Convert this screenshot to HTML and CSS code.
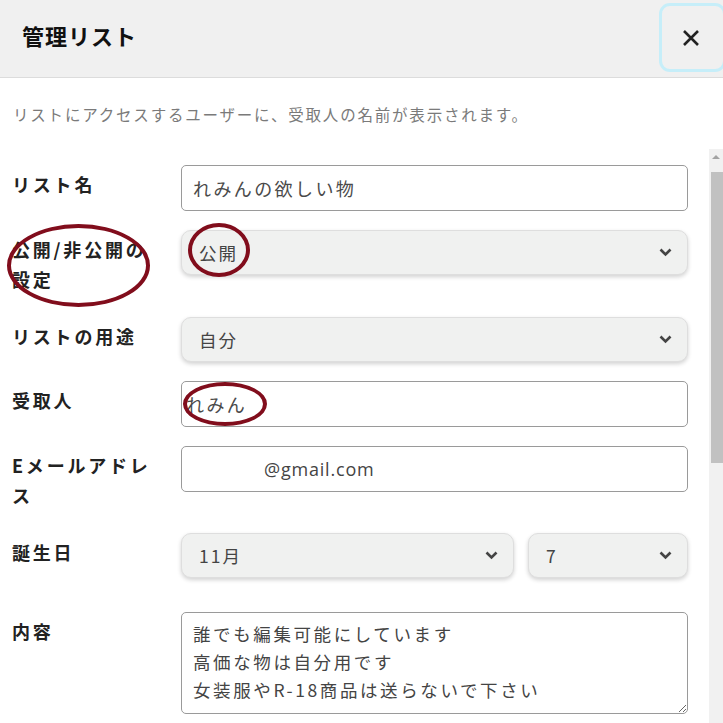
FILE: index.html
```html
<!DOCTYPE html>
<html lang="ja">
<head>
<meta charset="utf-8">
<title>管理リスト</title>
<link rel="stylesheet" href="styles.css">
</head>
<body>
<div class="modal">
  <header class="modal-header">
    <h1 class="modal-title">管理リスト</h1>
    <button class="close-btn" aria-label="閉じる">
      <svg width="20" height="20" viewBox="0 0 20 20"><path d="M3 3 L17 17 M17 3 L3 17" stroke="#222" stroke-width="2.6" fill="none"/></svg>
    </button>
  </header>
  <p class="note">リストにアクセスするユーザーに、受取人の名前が表示されます。</p>
  <div class="body">
    <form class="form">
      <div class="row">
        <label class="label">リスト名</label>
        <div class="field"><input class="input" type="text" value="れみんの欲しい物"></div>
      </div>
      <div class="row">
        <label class="label">公開/非公開の設定</label>
        <div class="field">
          <div class="select"><span>公開</span>
            <svg class="chev" width="13" height="9" viewBox="0 0 13 9"><path d="M1.5 1.5 L6.5 6.5 L11.5 1.5" stroke="#444" stroke-width="2.6" fill="none"/></svg>
          </div>
        </div>
      </div>
      <div class="row">
        <label class="label">リストの用途</label>
        <div class="field">
          <div class="select"><span>自分</span>
            <svg class="chev" width="13" height="9" viewBox="0 0 13 9"><path d="M1.5 1.5 L6.5 6.5 L11.5 1.5" stroke="#444" stroke-width="2.6" fill="none"/></svg>
          </div>
        </div>
      </div>
      <div class="row">
        <label class="label">受取人</label>
        <div class="field"><input class="input tight" type="text" value="れみん"></div>
      </div>
      <div class="row">
        <label class="label">Eメールアドレス</label>
        <div class="field"><div class="input email"><span class="mail">@gmail.com</span></div></div>
      </div>
      <div class="row row-bday">
        <label class="label">誕生日</label>
        <div class="field bday">
          <div class="select month"><span>11月</span>
            <svg class="chev" width="13" height="9" viewBox="0 0 13 9"><path d="M1.5 1.5 L6.5 6.5 L11.5 1.5" stroke="#444" stroke-width="2.6" fill="none"/></svg>
          </div>
          <div class="select day"><span>7</span>
            <svg class="chev" width="13" height="9" viewBox="0 0 13 9"><path d="M1.5 1.5 L6.5 6.5 L11.5 1.5" stroke="#444" stroke-width="2.6" fill="none"/></svg>
          </div>
        </div>
      </div>
      <div class="row">
        <label class="label">内容</label>
        <div class="field"><textarea class="textarea">誰でも編集可能にしています
高価な物は自分用です
女装服やR-18商品は送らないで下さい</textarea></div>
      </div>
    </form>
    <div class="scrollbar">
      <div class="sb-arrow"></div>
      <div class="sb-thumb"></div>
    </div>
  </div>
</div>
<div class="mark mark-label"></div>
<div class="mark mark-public"></div>
<div class="mark mark-name"></div>
</body>
</html>
```
FILE: styles.css
```css
html, body {
  margin: 0;
  padding: 0;
}
body {
  width: 723px;
  height: 723px;
  overflow: hidden;
  position: relative;
  background: #fff;
  font-family: "Noto Sans CJK JP", "Noto Sans", sans-serif;
  color: #222;
}
.modal {
  display: flex;
  flex-direction: column;
  height: 723px;
}
.modal-header {
  height: 77px;
  flex: none;
  display: flex;
  align-items: flex-start;
  justify-content: space-between;
  background: #f0f0f0;
  border-bottom: 1px solid #dcdcdc;
}
.modal-title {
  margin: 20px 0 0 22px;
  font-size: 22px;
  line-height: 30px;
  font-weight: 700;
  letter-spacing: 1px;
  color: #111;
}
.close-btn {
  margin: 3px -3px 0 0;
  width: 67px;
  height: 69px;
  box-sizing: border-box;
  border: 3px solid #c6eef9;
  border-radius: 11px;
  background: #f0f0f0;
  display: flex;
  align-items: center;
  justify-content: center;
  padding: 0 4px 0 0;
}
.close-btn svg {
  display: block;
}
.note {
  flex: none;
  margin: 0;
  padding: 24px 0 23px 13px;
  font-size: 15.5px;
  line-height: 24px;
  letter-spacing: 1.8px;
  color: #7a7a7a;
}
.body {
  flex: 1;
  display: flex;
  min-height: 0;
}
.form {
  flex: 1;
  padding: 16px 21px 0 12px;
}
.row {
  display: flex;
  gap: 19px;
  align-items: flex-start;
  margin-bottom: 19px;
}
.row-bday {
  margin-bottom: 34px;
}
.label {
  width: 150px;
  flex: none;
  padding: 4px 0;
  font-size: 18px;
  line-height: 30px;
  font-weight: 700;
  letter-spacing: 2.8px;
  color: #222;
}
.field {
  flex: 1;
  min-width: 0;
}
.input {
  display: block;
  width: 100%;
  height: 46px;
  box-sizing: border-box;
  border: 1px solid #9a9a9a;
  border-radius: 5px;
  background: #fff;
  padding: 0 11px;
  font-family: inherit;
  font-size: 18px;
  letter-spacing: 2.4px;
  color: #4a4a4a;
  outline: none;
}
.input.tight {
  padding-left: 4px;
}
.email {
  display: flex;
  align-items: center;
  padding-left: 82px;
}
.mail {
  font-family: "Open Sans", "Noto Sans", sans-serif;
  font-size: 18px;
  letter-spacing: 0.8px;
  color: #444;
}
.select {
  height: 45px;
  box-sizing: border-box;
  display: flex;
  align-items: center;
  justify-content: space-between;
  padding: 0 15px 0 17px;
  border: 1px solid #dedede;
  border-radius: 10px;
  background: #f0f1f0;
  box-shadow: 0 2px 4px rgba(0, 0, 0, 0.18);
  font-size: 17.5px;
  letter-spacing: 2px;
  color: #444;
}
.chev {
  display: block;
  flex: none;
}
.bday {
  display: flex;
  gap: 14px;
}
.month {
  flex: none;
  width: 333px;
}
.day {
  flex: 1;
}
.textarea {
  display: block;
  width: 100%;
  height: 102px;
  box-sizing: border-box;
  border: 1px solid #9a9a9a;
  border-radius: 5px;
  padding: 7px 11px;
  font-family: inherit;
  font-size: 17.5px;
  line-height: 28px;
  letter-spacing: 2.6px;
  color: #444;
  outline: none;
  overflow: hidden;
}
.scrollbar {
  flex: none;
  width: 14px;
  background: #f1f1f1;
  display: flex;
  flex-direction: column;
  align-items: flex-end;
}
.sb-arrow {
  width: 0;
  height: 0;
  margin: 6px 3px 13px 0;
  border-left: 4px solid transparent;
  border-right: 4px solid transparent;
  border-bottom: 4px solid #a3a3a3;
}
.sb-thumb {
  width: 12px;
  height: 291px;
  background: #c1c1c1;
}
.mark {
  position: absolute;
  box-sizing: border-box;
  border: 4px solid #810d1c;
  border-radius: 50%;
  pointer-events: none;
}
.mark-label {
  left: 7px;
  top: 224px;
  width: 143px;
  height: 83px;
}
.mark-public {
  left: 188px;
  top: 223px;
  width: 62px;
  height: 54px;
}
.mark-name {
  left: 183px;
  top: 382px;
  width: 84px;
  height: 44px;
}
```
